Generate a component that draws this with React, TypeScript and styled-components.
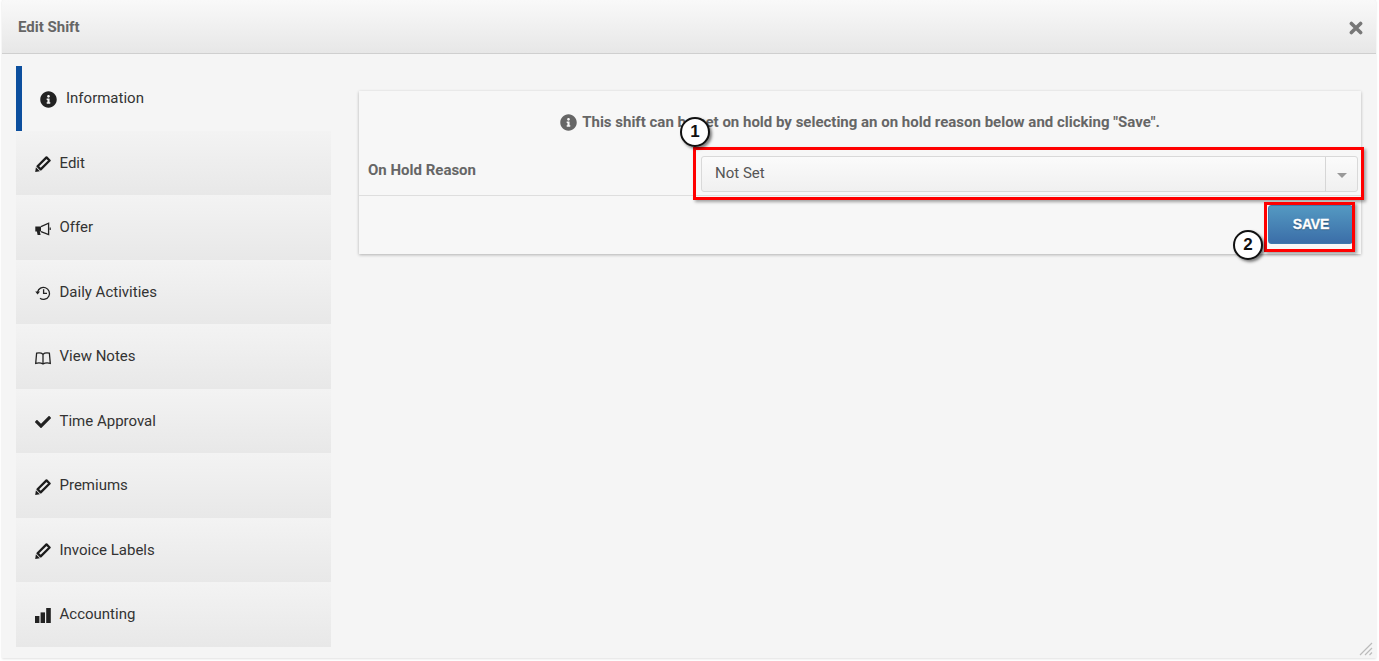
import React from "react";
import styled, { createGlobalStyle } from "styled-components";
import { FaInfoCircle, FaCheck } from "react-icons/fa";

const Global = createGlobalStyle`
  html, body { margin: 0; padding: 0; height: 100%; background: #fff; }
  body { font-family: Roboto, "Liberation Sans", sans-serif; overflow: hidden; }
`;

const Modal = styled.div`
  position: relative;
  width: 1374px;
  height: 658px;
  margin-left: 2px;
  background: #f5f5f5;
  box-shadow: 0 1px 2px rgba(0,0,0,.12);
  overflow: hidden;
`;
const Header = styled.header`
  height: 54px;
  box-sizing: border-box;
  padding: 0 13px 0 16px;
  display: flex;
  align-items: center;
  justify-content: space-between;
  background: linear-gradient(#f9f9f9, #e7e7e7);
  border-bottom: 1px solid #cfcfcf;
  border-radius: 3px 3px 0 0;
`;
const Title = styled.h1`
  margin: 1px 0 0;
  font-size: 15px;
  font-weight: 700;
  color: #666;
`;
const Close = styled.svg`
  display: block;
  width: 14px;
  height: 14px;
  margin-top: 2px;
`;
const Body = styled.div`
  display: grid;
  grid-template-columns: 315px 1002px;
  column-gap: 28px;
  padding: 12px 0 0 14px;
`;
const Nav = styled.nav`
  display: grid;
  grid-auto-rows: 64.5px;
`;
const NavItem = styled.div<{ $active?: boolean }>`
  display: flex;
  align-items: center;
  box-sizing: border-box;
  padding-left: 18px;
  font-size: 15px;
  color: #333;
  background: ${p => (p.$active ? "transparent" : "linear-gradient(#f3f3f3, #e8e8e8)")};
  border-left: ${p => (p.$active ? "6px solid #0c4f9e" : "0")};
`;
const NavLabel = styled.span`
  margin-top: -0.5px;
`;
const NavIcon = styled.span<{ $active?: boolean }>`
  display: flex;
  align-items: center;
  justify-content: center;
  width: 17px;
  height: 16px;
  margin-right: ${p => (p.$active ? "9px" : "8.5px")};
  margin-top: 3px;
  font-size: ${p => (p.$active ? "17px" : "16px")};
  color: #222;
`;
const Panel = styled.section`
  margin-top: 25px;
  height: 163px;
  background: #f7f7f7;
  box-shadow: 0 1px 3px rgba(0,0,0,.28);
  box-sizing: border-box;
  display: flex;
  flex-direction: column;
`;
const Notice = styled.div`
  display: flex;
  align-items: center;
  justify-content: center;
  gap: 6px;
  height: 59px;
  box-sizing: border-box;
  padding-top: 2px;
  font-size: 15px;
  font-weight: 700;
  color: #666;
`;
const NoticeIcon = styled.span`
  display: flex;
  font-size: 17px;
  color: #666;
  margin-top: 1px;
  margin-right: -1px;
`;
const FormRow = styled.div`
  display: flex;
  align-items: flex-start;
  box-sizing: border-box;
  height: 46px;
  border-bottom: 1px solid #dedede;
  padding: 6px 3px 0 9px;
`;
const Label = styled.label`
  width: 333px;
  font-size: 15px;
  font-weight: 700;
  color: #666;
  line-height: 28px;
`;
const Select = styled.div`
  flex: 1;
  height: 36px;
  box-sizing: border-box;
  display: flex;
  align-items: center;
  border: 1px solid #d9d9d9;
  border-radius: 3px;
  background: linear-gradient(#fbfbfb, #f0f0f0);
  font-size: 15px;
  color: #555;
`;
const SelectText = styled.span`
  flex: 1;
  padding-left: 13px;
  padding-bottom: 2px;
`;
const SelectArrow = styled.span`
  width: 31px;
  height: 100%;
  border-left: 1px solid #d6d6d6;
  display: flex;
  align-items: center;
  justify-content: center;
  &::after {
    content: "";
    border: 5px solid transparent;
    border-top: 5px solid #999;
    border-bottom: 0;
    margin-top: 2px;
  }
`;
const Footer = styled.div`
  flex: 1;
  display: flex;
  justify-content: flex-end;
  padding: 9px 8px 0 0;
`;
const SaveButton = styled.button`
  width: 85px;
  height: 39px;
  border: 1px solid #3f79ad;
  border-radius: 3px;
  background: linear-gradient(#5499c2, #3b6ea8);
  color: #fff;
  font-family: "Liberation Sans", Arial, sans-serif;
  font-size: 14px;
  font-weight: 700;
  letter-spacing: -0.2px;
  -webkit-text-stroke: 0.3px #fff;
  text-shadow: 0 1px 1px rgba(0,0,0,.4);
  padding: 0 0 1px 1px;
`;
const Highlight = styled.div<{ $x: number; $y: number; $w: number; $h: number }>`
  position: absolute;
  left: ${p => p.$x}px;
  top: ${p => p.$y}px;
  width: ${p => p.$w}px;
  height: ${p => p.$h}px;
  box-sizing: border-box;
  border: 3px solid #f00;
  box-shadow: 2px 2px 3px rgba(0,0,0,.35);
`;
const Callout = styled.div<{ $x: number; $y: number }>`
  position: absolute;
  left: ${p => p.$x}px;
  top: ${p => p.$y}px;
  width: 30px;
  height: 30px;
  box-sizing: border-box;
  border: 2px solid #111;
  border-radius: 50%;
  background: #fff;
  box-shadow: 2px 2px 3px rgba(0,0,0,.5);
  display: flex;
  align-items: center;
  justify-content: center;
  font-family: "Liberation Sans", Arial, sans-serif;
  font-weight: 700;
  font-size: 17px;
  color: #111;
`;
const Grip = styled.svg`
  position: absolute;
  right: 3px;
  bottom: 2px;
  width: 14px;
  height: 14px;
`;

const Pencil = () => (
  <svg width="16" height="16" viewBox="0 0 16 16" fill="none">
    <path d="M11.5 1.4 14.6 4.5 5.7 13.4 2.6 10.3Z" stroke="#1c1c1c" strokeWidth="2.3" strokeLinejoin="round" />
    <path d="M.2 15.9 .9 11.2 4.9 15.2Z" fill="#1c1c1c" />
  </svg>
);
const Book = () => (
  <svg width="16" height="14" viewBox="0 0 16 14" fill="none" stroke="#222" strokeWidth="1.3">
    <path d="M8 3.2C6.6 2 4 1.7 1.6 2.2L.7 12.4C3 11.8 6 11.9 8 12.9C10 11.9 13 11.8 15.3 12.4L14.4 2.2C12 1.7 9.4 2 8 3.2Z" />
    <path d="M8 3.2V12.9" />
  </svg>
);
const Bullhorn = () => (
  <svg width="16" height="14" viewBox="0 0 16 14">
    <path d="M.3 4.6H6V9.6H4.8L5.6 13H2.6L1.9 9.6H.3Z" fill="#222" />
    <path d="M6 4.6 13.6 1.2V12.6L6 9.6" fill="none" stroke="#222" strokeWidth="1.3" />
    <path d="M14.6 5.6H15.8V8H14.6Z" fill="#222" />
  </svg>
);
const History = () => (
  <svg width="16" height="16" viewBox="0 0 16 16" fill="none" stroke="#222" strokeWidth="1.3">
    <path d="M2.6 7.2A6 6 0 1 1 5 13.3" />
    <path d="M.2 6.4H5L2.6 9.4Z" fill="#222" stroke="none" />
    <path d="M8.6 4.2V8.4H12" />
  </svg>
);
const Bars = () => (
  <svg width="16" height="15" viewBox="0 0 16 15" fill="#222">
    <rect x="0" y="8" width="4.4" height="7" />
    <rect x="5.6" y="4.4" width="4.4" height="10.6" />
    <rect x="11.2" y="0" width="4.6" height="15" />
  </svg>
);

const items = [
  { label: "Edit", icon: <Pencil /> },
  { label: "Offer", icon: <Bullhorn /> },
  { label: "Daily Activities", icon: <History /> },
  { label: "View Notes", icon: <Book /> },
  { label: "Time Approval", icon: <FaCheck /> },
  { label: "Premiums", icon: <Pencil /> },
  { label: "Invoice Labels", icon: <Pencil /> },
  { label: "Accounting", icon: <Bars /> },
];

export default function App() {
  return (
    <>
      <Global />
      <Modal>
        <Header>
          <Title>Edit Shift</Title>
          <Close viewBox="0 0 14 14" stroke="#777" strokeWidth="3.6" strokeLinecap="round">
            <path d="M2.4 2.4 11.6 11.6M11.6 2.4 2.4 11.6" />
          </Close>
        </Header>
        <Body>
          <Nav>
            <NavItem $active>
              <NavIcon $active><FaInfoCircle /></NavIcon>
              <NavLabel>Information</NavLabel>
            </NavItem>
            {items.map(i => (
              <NavItem key={i.label}>
                <NavIcon>{i.icon}</NavIcon>
                <NavLabel>{i.label}</NavLabel>
              </NavItem>
            ))}
          </Nav>
          <Panel>
            <Notice>
              <NoticeIcon><FaInfoCircle /></NoticeIcon>
              This shift can be set on hold by selecting an on hold reason below and clicking "Save".
            </Notice>
            <FormRow>
              <Label>On Hold Reason</Label>
              <Select>
                <SelectText>Not Set</SelectText>
                <SelectArrow />
              </Select>
            </FormRow>
            <Footer>
              <SaveButton>SAVE</SaveButton>
            </Footer>
          </Panel>
        </Body>
        <Highlight $x={691} $y={147} $w={671} $h={53} />
        <Highlight $x={1262} $y={202} $w={91} $h={50} />
        <Callout $x={678} $y={117}>1</Callout>
        <Callout $x={1231} $y={230}>2</Callout>
        <Grip viewBox="0 0 14 14" stroke="#bbb" strokeWidth="1.2">
          <path d="M1 13 13 1M6 13 13 6M10.5 13 13 10.5" />
        </Grip>
      </Modal>
    </>
  );
}
